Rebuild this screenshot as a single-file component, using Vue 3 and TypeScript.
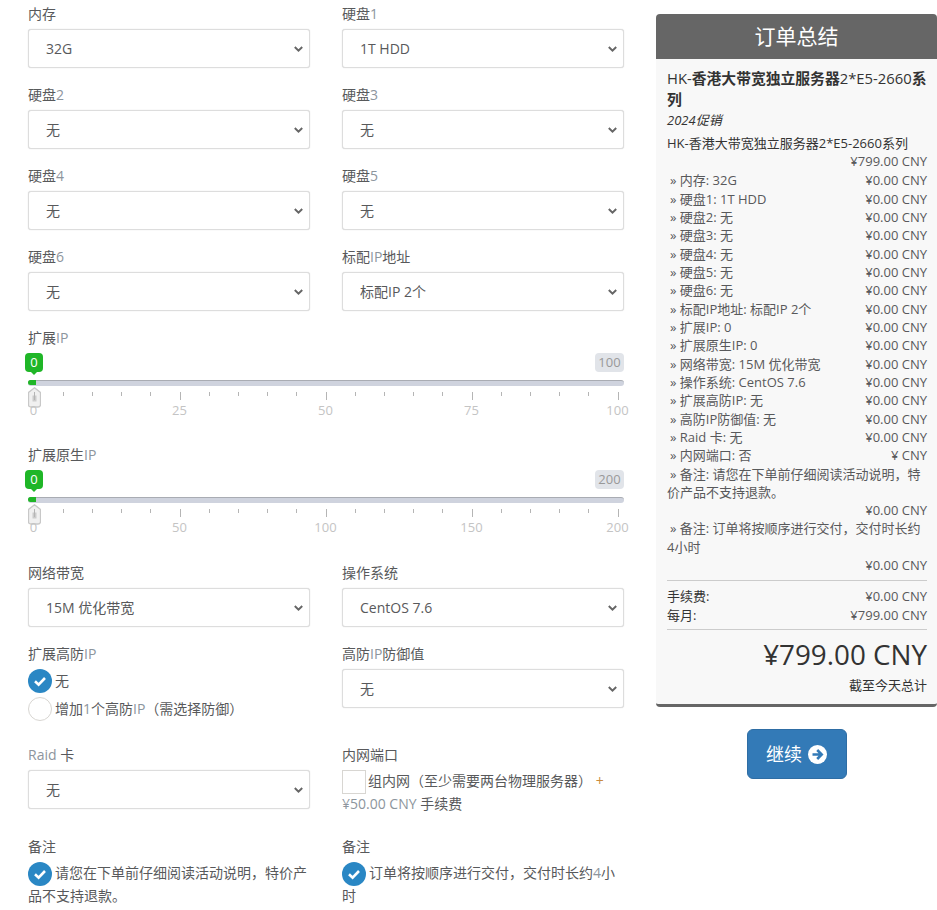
<script setup lang="ts">
interface OrderLine {
  label: string
  price: string
  long?: boolean
}

// the page draws latin text in a lighter tone than the chinese next to it
const firstSelects = [
  [
    { label: '内存', thin: '', value: '32G' },
    { label: '硬盘', thin: '1', value: '1T HDD' },
  ],
  [
    { label: '硬盘', thin: '2', value: '无' },
    { label: '硬盘', thin: '3', value: '无' },
  ],
  [
    { label: '硬盘', thin: '4', value: '无' },
    { label: '硬盘', thin: '5', value: '无' },
  ],
  [
    { label: '硬盘', thin: '6', value: '无' },
    { label: '标配', thin: 'IP', after: '地址', value: '标配IP 2个' },
  ],
]

const sliders = [
  { label: '扩展', max: 100, marks: [0, 25, 50, 75, 100] },
  { label: '扩展原生', max: 200, marks: [0, 50, 100, 150, 200] },
]

// 0 to 100 spans 584px of the 596px track
const tickLeft = (i: number) => `${5.5 + i * 29.2}px`
const ticks = Array.from({ length: 21 }, (_, i) => i)

const orderLines: OrderLine[] = [
  { label: '» 内存: 32G', price: '¥0.00 CNY' },
  { label: '» 硬盘1: 1T HDD', price: '¥0.00 CNY' },
  { label: '» 硬盘2: 无', price: '¥0.00 CNY' },
  { label: '» 硬盘3: 无', price: '¥0.00 CNY' },
  { label: '» 硬盘4: 无', price: '¥0.00 CNY' },
  { label: '» 硬盘5: 无', price: '¥0.00 CNY' },
  { label: '» 硬盘6: 无', price: '¥0.00 CNY' },
  { label: '» 标配IP地址: 标配IP 2个', price: '¥0.00 CNY' },
  { label: '» 扩展IP: 0', price: '¥0.00 CNY' },
  { label: '» 扩展原生IP: 0', price: '¥0.00 CNY' },
  { label: '» 网络带宽: 15M 优化带宽', price: '¥0.00 CNY' },
  { label: '» 操作系统: CentOS 7.6', price: '¥0.00 CNY' },
  { label: '» 扩展高防IP: 无', price: '¥0.00 CNY' },
  { label: '» 高防IP防御值: 无', price: '¥0.00 CNY' },
  { label: '» Raid 卡: 无', price: '¥0.00 CNY' },
  { label: '» 内网端口: 否', price: '¥ CNY' },
  { label: '» 备注: 请您在下单前仔细阅读活动说明，特价产品不支持退款。', price: '¥0.00 CNY', long: true },
  { label: '» 备注: 订单将按顺序进行交付，交付时长约4小时', price: '¥0.00 CNY', long: true },
]
</script>

<template>
  <div class="page">
    <main class="config">
      <div v-for="(row, r) in firstSelects" :key="r" class="row">
        <div v-for="f in row" :key="f.label + f.thin" class="field">
          <label class="label">{{ f.label }}<span class="thin">{{ f.thin }}</span>{{ f.after }}</label>
          <select class="select"><option>{{ f.value }}</option></select>
        </div>
      </div>

      <div v-for="s in sliders" :key="s.label" class="slider-field">
        <label class="label">{{ s.label }}<span class="thin">IP</span></label>
        <div class="slider">
          <span class="bubble">0</span>
          <span class="bubble-max">{{ s.max }}</span>
          <div class="track"><div class="track-fill"></div></div>
          <svg class="handle" width="13" height="21" viewBox="0 0 13 21">
            <path d="M6.5 .8 12.5 5.5V17.5Q12.5 20 10 20H3Q.5 20 .5 17.5V5.5Z" fill="#f0f0f0" stroke="#c8c8c8" stroke-width="1.3" />
            <rect x="4.5" y="8.5" width="4" height="6" fill="#ccc" />
          </svg>
          <i
            v-for="t in ticks"
            :key="t"
            class="tick"
            :class="{ major: t % 5 === 0 }"
            :style="{ left: tickLeft(t) }"
          ></i>
          <span
            v-for="(m, i) in s.marks"
            :key="m"
            class="mark"
            :style="{ left: tickLeft(i * 5) }"
          >{{ m }}</span>
        </div>
      </div>

      <div class="row">
        <div class="field">
          <label class="label">网络带宽</label>
          <select class="select"><option>15M 优化带宽</option></select>
        </div>
        <div class="field">
          <label class="label">操作系统</label>
          <select class="select"><option>CentOS 7.6</option></select>
        </div>
      </div>

      <div class="row">
        <div class="field field-radios">
          <label class="label">扩展高防<span class="thin">IP</span></label>
          <div class="choice">
            <svg class="tick-icon" width="24" height="24" viewBox="0 0 24 24">
              <circle cx="12" cy="12" r="12" fill="#2a87c4" />
              <path d="M7 12.2 10.6 15.6 17 9" fill="none" stroke="#fff" stroke-width="2.6" />
            </svg>无
          </div>
          <div class="choice">
            <span class="circle"></span>增加<span class="thin">1</span>个高防<span class="thin">IP</span>（需选择防御）
          </div>
        </div>
        <div class="field">
          <label class="label">高防<span class="thin">IP</span>防御值</label>
          <select class="select"><option>无</option></select>
        </div>
      </div>

      <div class="row">
        <div class="field">
          <label class="label"><span class="thin">Raid</span> 卡</label>
          <select class="select"><option>无</option></select>
        </div>
        <div class="field field-text">
          <label class="label">内网端口</label>
          <p class="wrapped">
            <span class="square"></span>组内网（至少需要两台物理服务器） <span class="plus">+</span> <span class="thin">¥50.00 CNY</span> 手续费
          </p>
        </div>
      </div>

      <div class="row">
        <div class="field field-last">
          <label class="label">备注</label>
          <p class="wrapped">
            <svg class="tick-icon" width="24" height="24" viewBox="0 0 24 24">
              <circle cx="12" cy="12" r="12" fill="#2a87c4" />
              <path d="M7 12.2 10.6 15.6 17 9" fill="none" stroke="#fff" stroke-width="2.6" />
            </svg>请您在下单前仔细阅读活动说明，特价产品不支持退款。
          </p>
        </div>
        <div class="field field-last">
          <label class="label">备注</label>
          <p class="wrapped">
            <svg class="tick-icon" width="24" height="24" viewBox="0 0 24 24">
              <circle cx="12" cy="12" r="12" fill="#2a87c4" />
              <path d="M7 12.2 10.6 15.6 17 9" fill="none" stroke="#fff" stroke-width="2.6" />
            </svg>订单将按顺序进行交付，交付时长约<span class="thin">4</span>小<br />时
          </p>
        </div>
      </div>
    </main>

    <aside class="side">
      <section class="summary">
        <h2 class="summary-title">订单总结</h2>
        <div class="summary-body">
          <div class="product"><span class="latin">HK-</span>香港大带宽独立服务器<span class="latin">2*E5-2660</span>系<br />列</div>
          <div class="group">2024促销</div>
          <div class="product-line">HK-香港大带宽独立服务器2*E5-2660系列</div>
          <div class="price-line">¥799.00 CNY</div>
          <div v-for="(l, i) in orderLines" :key="i" class="line" :class="{ long: l.long }">
            <span class="price">{{ l.price }}</span>
            <span class="line-label">{{ l.label }}</span>
          </div>
          <div class="subtotals">
            <div class="sub"><span>手续费:</span><span class="sub-price">¥0.00 CNY</span></div>
            <div class="sub"><span>每月:</span><span class="sub-price">¥799.00 CNY</span></div>
          </div>
          <div class="total">¥799.00 CNY</div>
          <div class="total-note">截至今天总计</div>
        </div>
      </section>
      <button class="continue" type="button">
        继续
        <svg width="19" height="19" viewBox="0 0 19 19">
          <circle cx="9.5" cy="9.5" r="9.5" fill="#fff" />
          <path d="M4.5 9.5H13M9.2 5 13.7 9.5 9.2 14" fill="none" stroke="#337ab7" stroke-width="2.6" />
        </svg>
      </button>
    </aside>
  </div>
</template>

<style>
html,
body {
  margin: 0;
  background: #fff;
}
</style>

<style scoped>
.page {
  display: flex;
  height: 910px;
  overflow: hidden;
  padding: 4px 0 0 28px;
  box-sizing: border-box;
  font-family: 'Open Sans', 'Noto Sans CJK SC', sans-serif;
  font-size: 14px;
  line-height: 20px;
  color: #58595b;
}

.config {
  width: 596px;
  flex: none;
}

.row {
  display: grid;
  grid-template-columns: 282px 282px;
  column-gap: 32px;
}

.field {
  margin-bottom: 17px;
}

.field-radios {
  margin-bottom: 20px;
}

.field-text {
  margin-bottom: 23px;
}

.label {
  display: block;
  margin-bottom: 5px;
  font-weight: 400;
  color: #58595b;
}

.thin {
  color: #8d959d;
}

.select {
  display: block;
  width: 100%;
  height: 39px;
  padding: 0 8px 0 17px;
  border: 1px solid #ddd;
  border-radius: 3px;
  appearance: none;
  background: #fff url("data:image/svg+xml,%3Csvg xmlns='http://www.w3.org/2000/svg' width='9' height='6' viewBox='0 0 9 6'%3E%3Cpath d='M.8 1 4.5 4.6 8.2 1' fill='none' stroke='%23666' stroke-width='2'/%3E%3C/svg%3E") no-repeat right 6px center;
  box-shadow: 0 0 1px #ccc;
  font: inherit;
  color: #58595b;
}

.slider-field .label {
  margin-bottom: 0;
}

.slider {
  position: relative;
  height: 97px;
}

.slider-field + .slider-field .slider {
  height: 98px;
}

.bubble,
.bubble-max {
  position: absolute;
  top: 5px;
  height: 19px;
  border-radius: 4px;
  font-size: 13px;
  line-height: 19px;
  text-align: center;
}

.bubble {
  left: -3px;
  width: 18px;
  background: #1fb627;
  color: #fff;
}

.bubble::after {
  content: '';
  position: absolute;
  left: 6px;
  top: 19px;
  border: 3px solid transparent;
  border-top-color: #1fb627;
}

.bubble-max {
  right: 0;
  width: 29px;
  background: #e1e4e9;
  color: #999;
}

.track {
  position: absolute;
  left: 0;
  right: 0;
  top: 32px;
  height: 6px;
  box-sizing: border-box;
  border-top: 1px solid #a9acb3;
  border-radius: 3px;
  background: #cfd3de;
}

.track-fill {
  position: absolute;
  left: 0;
  top: -1px;
  width: 8px;
  height: 5px;
  border-radius: 3px 0 0 3px;
  background: #1fb627;
}

.handle {
  position: absolute;
  left: 0;
  top: 39px;
}

.tick {
  position: absolute;
  top: 44px;
  width: 1px;
  height: 4px;
  background: #b5b5b5;
}

.tick.major {
  height: 8px;
}

.mark {
  position: absolute;
  top: 52px;
  width: 40px;
  margin-left: -20px;
  font-size: 13px;
  line-height: 20px;
  text-align: center;
  color: #c4c4c4;
}

.choice {
  display: flex;
  align-items: center;
  height: 24px;
  margin-bottom: 4px;
}

.tick-icon {
  margin-right: 3px;
  vertical-align: middle;
}

.circle {
  width: 24px;
  height: 24px;
  box-sizing: border-box;
  margin-right: 3px;
  border: 1px solid #d8d6d2;
  border-radius: 50%;
  background: #fff;
}

.square {
  display: inline-block;
  width: 24px;
  height: 24px;
  box-sizing: border-box;
  margin-right: 2px;
  border: 1px solid #d8d6d2;
  vertical-align: middle;
}

.plus {
  color: #c98a3d;
}

.wrapped {
  margin: 0;
}

.field-last {
  margin-bottom: 0;
}

.side {
  width: 281px;
  flex: none;
  margin-left: 32px;
  padding-top: 10px;
}

.summary {
  border-bottom: 3px solid #666;
  border-radius: 4px;
  background: #f8f8f8;
}

.summary-title {
  margin: 0;
  padding: 0;
  height: 45px;
  border-radius: 4px 4px 0 0;
  background: #666;
  color: #fff;
  font-size: 21px;
  font-weight: 400;
  line-height: 44px;
  text-align: center;
}

.summary-body {
  padding: 9px 10px 10px 11px;
  font-size: 13px;
  line-height: 18.33px;
  color: #333;
}

.product {
  font-size: 14.8px;
  font-weight: 700;
  line-height: 21px;
  color: #333;
}

.latin {
  font-weight: 400;
}

.group {
  margin-bottom: 4px;
  font-size: 13px;
  font-style: italic;
  line-height: 20px;
}

.product-line {
  color: #333;
}

.price-line {
  margin-bottom: 0.6px;
  text-align: right;
  color: #58595b;
}

.line {
  text-indent: 3px;
  color: #58595b;
}

.price {
  float: right;
  text-indent: 0;
}

.line.long {
  display: flex;
  flex-direction: column-reverse;
}

.line.long .price {
  float: none;
  text-align: right;
}

.subtotals {
  margin-top: 6px;
  padding: 6px 0 5px;
  border-top: 1px solid #ccc;
  border-bottom: 1px solid #ccc;
}

.sub {
  display: flex;
  justify-content: space-between;
}

.sub-price {
  color: #58595b;
}

.total {
  margin-top: 5px;
  font-size: 27.8px;
  line-height: 38px;
  text-align: right;
  color: #333;
}

.total-note {
  margin-top: 3px;
  text-align: right;
}

.continue {
  display: flex;
  align-items: center;
  justify-content: center;
  gap: 6px;
  width: 100px;
  height: 50px;
  margin: 22px auto 0;
  padding: 0;
  border: 1px solid #2e6da4;
  border-radius: 6px;
  background: #337ab7;
  color: #fff;
  font: inherit;
  font-size: 18px;
}
</style>
